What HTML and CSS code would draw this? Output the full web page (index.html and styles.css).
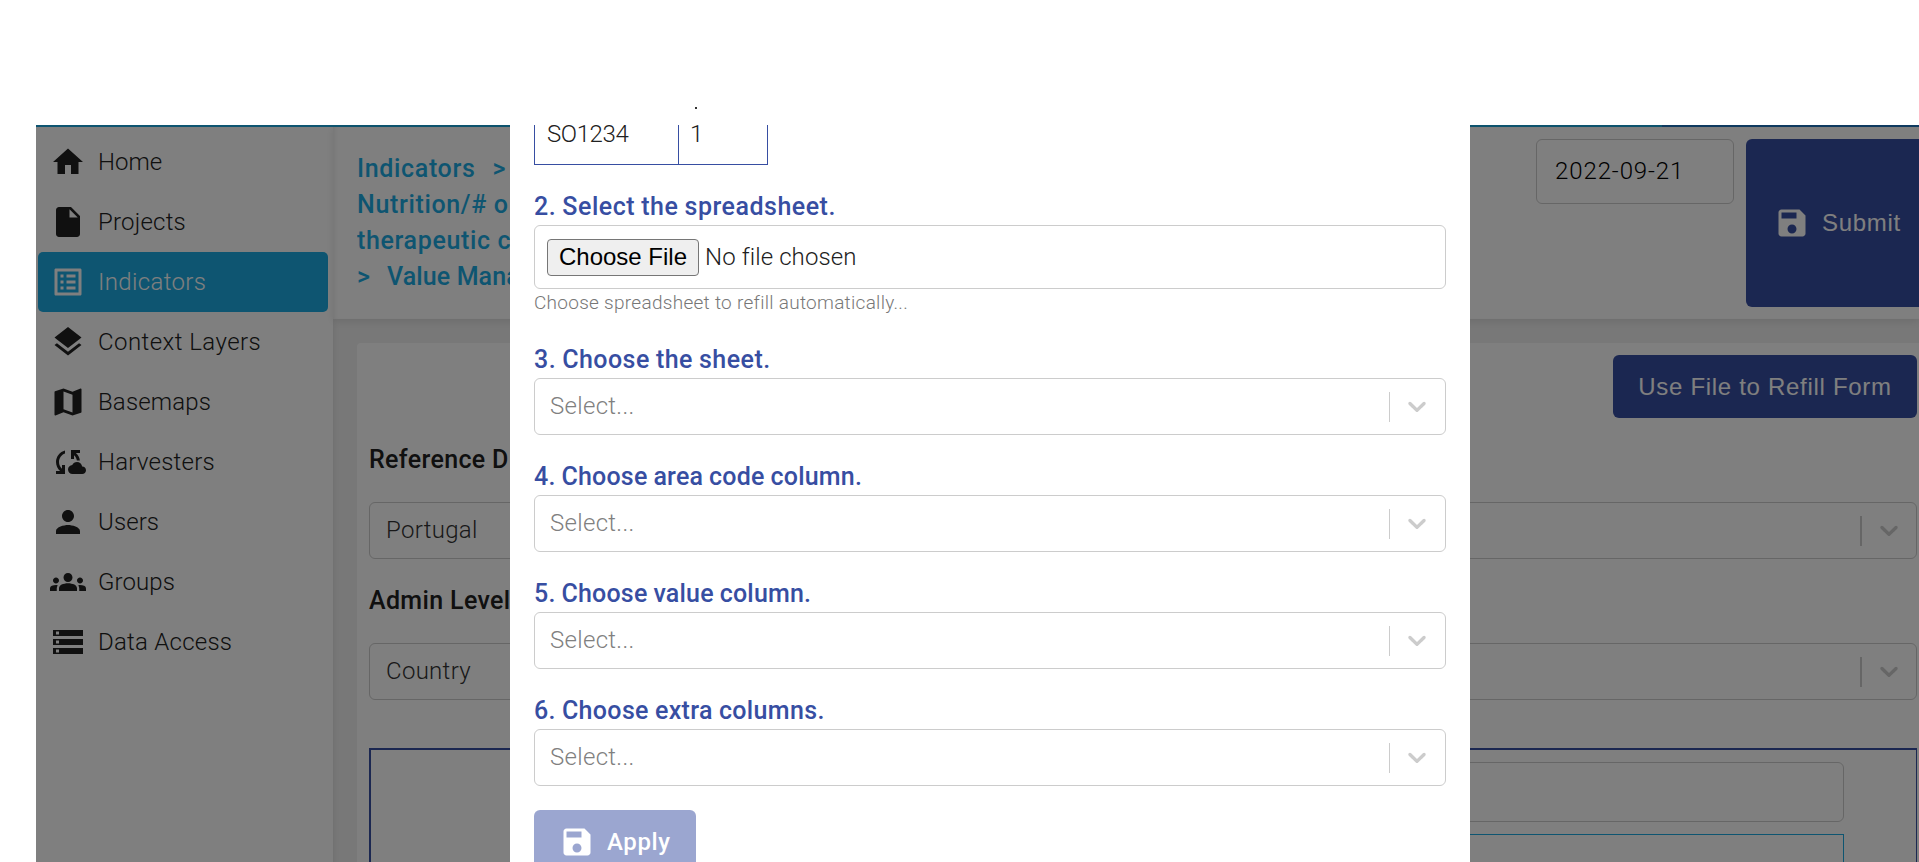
FILE: index.html
```html
<!DOCTYPE html>
<html lang="en">
<head>
<meta charset="utf-8">
<title>Value Manager</title>
<link rel="stylesheet" href="styles.css">
</head>
<body>
<svg class="defs" width="0" height="0">
  <symbol id="save" viewBox="0 0 24 24"><path d="M17 3H5c-1.11 0-2 .9-2 2v14c0 1.1.89 2 2 2h14c1.1 0 2-.9 2-2V7l-4-4zm-5 16c-1.66 0-3-1.34-3-3s1.34-3 3-3 3 1.34 3 3-1.34 3-3 3zm3-10H5V5h10v4z"/></symbol>
  <symbol id="chev" viewBox="0 0 20 20"><path d="M4.516 7.548c0.436-0.446 1.043-0.481 1.576 0l3.908 3.747 3.908-3.747c0.533-0.481 1.141-0.446 1.574 0 0.436 0.445 0.408 1.197 0 1.615-0.406 0.418-4.695 4.502-4.695 4.502-0.217 0.223-0.502 0.335-0.787 0.335s-0.57-0.112-0.789-0.335c0 0-4.287-4.084-4.695-4.502s-0.436-1.17 0-1.615z"/></symbol>
</svg>
<div class="app">
  <div class="topline"><div class="topline-end"></div></div>
  <div class="body">
    <nav class="side">
      <a class="item"><svg viewBox="0 0 24 24"><path d="M10 20v-6h4v6h5v-8h3L12 3 2 12h3v8z"/></svg><span class="n1">Home</span></a>
      <a class="item"><svg viewBox="0 0 24 24"><path d="M6 2c-1.1 0-1.99.9-1.99 2L4 20c0 1.1.89 2 1.99 2H18c1.1 0 2-.9 2-2V8l-6-6H6zm7 7V3.500L18.500 9H13z"/></svg><span class="n2">Projects</span></a>
      <a class="item active"><svg viewBox="0 0 24 24"><path d="M19 5v14H5V5h14m1.100-2H3.900c-.5 0-.9.4-.9.9v16.200c0 .4.4.9.9.9h16.200c.4 0 .9-.5.9-.9V3.900c0-.5-.5-.9-.9-.9zM11 7h6v2h-6V7zm0 4h6v2h-6v-2zm0 4h6v2h-6zM7 7h2v2H7zm0 4h2v2H7zm0 4h2v2H7z"/></svg><span class="n3">Indicators</span></a>
      <a class="item"><svg viewBox="0 0 24 24"><path d="M11.990 18.540l-7.370-5.730L3 14.070l9 7 9-7-1.630-1.270-7.380 5.740zM12 16l7.360-5.730L21 9l-9-7-9 7 1.630 1.270L12 16z"/></svg><span class="n4">Context Layers</span></a>
      <a class="item"><svg viewBox="0 0 24 24"><path d="M20.500 3l-.16.03L15 5.100 9 3 3.360 4.900c-.21.07-.36.25-.36.48V20.500c0 .28.22.5.5.5l.16-.03L9 18.900l6 2.100 5.640-1.900c.21-.07.36-.25.36-.48V3.500c0-.28-.22-.5-.5-.5zM15 19l-6-2.110V5l6 2.110V19z"/></svg><span class="n5">Basemaps</span></a>
      <a class="item"><svg viewBox="0 0 24 24"><path d="M21.500 14.980c-.02 0-.03 0-.05.01C21.200 13.300 19.760 12 18 12c-1.400 0-2.600.83-3.160 2.020C13.260 14.100 12 15.400 12 17c0 1.660 1.340 3 3 3l6.500-.02c1.380 0 2.500-1.120 2.500-2.500s-1.120-2.500-2.500-2.500zM10 4.260v2.090C7.670 7.180 6 9.390 6 12c0 1.770.78 3.340 2 4.440V14h2v6H4v-2h2.730C5.060 16.540 4 14.400 4 12c0-3.730 2.550-6.850 6-7.740zM20 6h-2.730c1.430 1.260 2.410 3.010 2.660 5h-2.020c-.23-1.360-.93-2.550-1.910-3.440V10h-2V4h6v2z"/></svg><span class="n6">Harvesters</span></a>
      <a class="item"><svg viewBox="0 0 24 24"><path d="M12 12c2.210 0 4-1.790 4-4s-1.790-4-4-4-4 1.790-4 4 1.790 4 4 4zm0 2c-2.670 0-8 1.340-8 4v2h16v-2c0-2.660-5.330-4-8-4z"/></svg><span class="n7">Users</span></a>
      <a class="item"><svg viewBox="0 0 24 24"><path d="M12 12.750c1.630 0 3.070.39 4.240.9 1.080.48 1.760 1.560 1.760 2.730V18H6v-1.610c0-1.180.68-2.260 1.760-2.730 1.170-.52 2.610-.91 4.240-.91zM4 13c1.100 0 2-.9 2-2s-.9-2-2-2-2 .9-2 2 .9 2 2 2zm1.130 1.100c-.37-.06-.74-.1-1.130-.1-.99 0-1.930.21-2.780.58C.48 14.900 0 15.620 0 16.430V18h4.500v-1.610c0-.83.23-1.610.63-2.290zM20 13c1.100 0 2-.9 2-2s-.9-2-2-2-2 .9-2 2 .9 2 2 2zm4 3.430c0-.81-.48-1.530-1.220-1.850-.85-.37-1.790-.58-2.780-.58-.39 0-.76.04-1.130.1.4.68.63 1.460.63 2.290V18H24v-1.570zM12 6c1.660 0 3 1.340 3 3s-1.340 3-3 3-3-1.340-3-3 1.340-3 3-3z"/></svg><span class="n8">Groups</span></a>
      <a class="item"><svg viewBox="0 0 24 24"><path d="M2 20h20v-4H2v4zm2-3h2v2H4v-2zM2 4v4h20V4H2zm4 3H4V5h2v2zm-4 7h20v-4H2v4zm2-3h2v2H4v-2z"/></svg><span class="n9">Data Access</span></a>
    </nav>
    <main class="main">
      <header class="head">
        <div class="crumbs">
          <div><span>Indicators</span><span class="gt">&gt;</span></div>
          <div>Nutrition/# o</div>
          <div>therapeutic c</div>
          <div class="last"><span class="gt0">&gt;</span><span>Value Mana</span></div>
        </div>
        <div class="date"><span>2022-09-21</span></div>
        <div class="submit"><svg><use href="#save"/></svg><span>Submit</span></div>
      </header>
      <section class="panel">
        <div class="refill"><span>Use File to Refill Form</span></div>
        <div class="flabel">Reference D</div>
        <div class="sel wide"><span class="val">Portugal</span><i></i><svg><use href="#chev"/></svg></div>
        <div class="flabel second">Admin Level</div>
        <div class="sel wide"><span class="val">Country</span><i></i><svg><use href="#chev"/></svg></div>
        <div class="grid">
          <div class="input"></div>
          <div class="subgrid"></div>
        </div>
      </section>
    </main>
  </div>
  <div class="overlay">
    <div class="modal">
      <div class="tbl"><div class="c1"><span>SO1234</span></div><div class="c2"><span>1</span></div></div>
      <div class="group">
        <div class="label l2">2. Select the spreadsheet.</div>
        <div class="file"><span class="btn">Choose File</span><span class="none">No file chosen</span></div>
        <div class="hint">Choose spreadsheet to refill automatically...</div>
      </div>
      <div class="group">
        <div class="label l3">3. Choose the sheet.</div>
        <div class="sel"><span class="ph">Select...</span><i></i><svg><use href="#chev"/></svg></div>
      </div>
      <div class="group">
        <div class="label l4">4. Choose area code column.</div>
        <div class="sel"><span class="ph">Select...</span><i></i><svg><use href="#chev"/></svg></div>
      </div>
      <div class="group">
        <div class="label l5">5. Choose value column.</div>
        <div class="sel"><span class="ph">Select...</span><i></i><svg><use href="#chev"/></svg></div>
      </div>
      <div class="group">
        <div class="label l6">6. Choose extra columns.</div>
        <div class="sel"><span class="ph">Select...</span><i></i><svg><use href="#chev"/></svg></div>
      </div>
      <div class="apply"><svg><use href="#save"/></svg><span>Apply</span></div>
    </div>
  </div>
</div>
<div class="speck"></div>
</body>
</html>
```

FILE: styles.css
```css
* { box-sizing: border-box; }
html, body { margin: 0; height: 862px; overflow: hidden; background: #fff; }
body {
  padding: 125px 0 0 36px;
  font: 300 24px/36px Roboto, "Open Sans", sans-serif;
  color: #212121;
}
span, .label, .crumbs div, .flabel, .hint { white-space: nowrap; }
svg { display: block; fill: currentColor; flex: none; }
.defs { position: absolute; }
.app { position: relative; width: 1883px; height: 737px; overflow: hidden; display: flex; flex-direction: column; }
.topline { height: 2px; background: #1cabe2; display: flex; justify-content: flex-end; flex: none; }
.topline-end { width: 257px; background: #1f78c4; }
.body { display: flex; flex: 1; }
.side { width: 297px; padding: 5px 5px 0 2px; flex: none; background: #fff; }
.item { display: flex; align-items: center; height: 60px; padding-left: 12px; border-radius: 5px; }
.item svg { width: 36px; height: 36px; margin-right: 12px; }
.item.active { background: #1cabe2; color: #fff; }
.n2 { letter-spacing: .22px; }
.n3 { letter-spacing: .35px; }
.n4 { letter-spacing: .45px; }
.n5 { letter-spacing: .15px; }
.n6, .n9 { letter-spacing: .25px; }
.n7, .n8 { letter-spacing: .1px; }
.main { flex: 1; min-width: 0; background: #f0f0f0; box-shadow: inset 4px 0 6px -3px rgba(0,0,0,.08); }
.head { height: 192px; background: #fff; padding: 12px 0 12px 24px; display: flex; box-shadow: inset 4px 0 6px -4px rgba(0,0,0,.12), 0 2px 8px rgba(0,0,0,.1); }
.crumbs { width: 1179px; padding-top: 12px; color: #1cabe2; font-size: 25px; font-weight: 500; letter-spacing: .65px; overflow: hidden; flex: none; }
.crumbs .last { letter-spacing: .1px; }
.gt { margin-left: 17px; }
.gt0 { margin-right: 17px; }
.date { width: 198px; height: 65px; border: 1px solid #ccc; border-radius: 6px; padding: 13px 18px; color: #000; letter-spacing: .9px; flex: none; }
.submit, .refill { background: #374ea2; color: #fff; border-radius: 6px; font-family: "Liberation Sans", Arial, sans-serif; font-weight: 400; letter-spacing: .7px; display: flex; align-items: center; }
.submit { width: 190px; margin-left: 12px; padding-left: 28px; height: 168px; flex: none; }
.submit svg, .apply svg { width: 36px; height: 36px; margin-right: 12px; }
.panel { margin: 24px 0 0 24px; padding: 12px 2px 0 12px; background: #fff; height: 560px; border-radius: 4px 0 0 0; }
.refill { width: 304px; height: 63px; margin-left: auto; justify-content: center; }
.flabel { font-size: 25px; font-weight: 500; letter-spacing: .35px; margin: 24px 0 24px; }
.sel { height: 57px; border: 1px solid #ccc; border-radius: 6px; display: flex; align-items: center; padding: 0 13px 0 15px; color: #ccc; background: #fff; }
.sel span { letter-spacing: .3px; padding-bottom: 1px; }
.sel .val { color: #333; padding-left: 1px; }
.sel .ph { color: #808080; }
.sel i { width: 1px; height: 30px; background: currentColor; margin: 0 12px 0 auto; }
.sel.wide { padding-right: 12px; }
.sel.wide i { width: 2px; }
.sel svg { width: 30px; height: 30px; margin-bottom: 1px; }
.grid { margin-top: 48px; height: 200px; border: 2px solid #374ea2; border-right-width: 1px; padding: 12px 72px 0 200px; }
.input { height: 60px; border: 1px solid #ccc; border-radius: 6px; }
.subgrid { margin-top: 12px; height: 100px; border: 1px solid #1cabe2; }
.overlay { position: absolute; inset: 0; background: rgba(0,0,0,.5); }
.modal { width: 960px; height: 737px; margin-left: 474px; padding: 0 24px; background: #fff; overflow: hidden; }
.tbl { display: flex; width: 234px; height: 40px; border: 1px solid #374ea2; border-top: 0; margin-bottom: 24px; overflow: hidden; }
.tbl span { display: block; margin-top: -9px; }
.c1 { width: 144px; border-right: 1px solid #374ea2; padding-left: 12px; letter-spacing: -.4px; }
.c2 { padding-left: 11px; }
.group { margin-bottom: 24px; }
.label { height: 36px; font-size: 25px; font-weight: 500; color: #374ea2; letter-spacing: .2px; word-spacing: -.5px; }
.l2 { letter-spacing: .5px; }
.l3 { letter-spacing: .45px; }
.l6 { letter-spacing: .35px; }
.file { height: 64px; border: 1px solid #ccc; border-radius: 6px; display: flex; align-items: center; padding-left: 12px; }
.btn { width: 152px; height: 37px; border: 1px solid #767676; border-radius: 4px; background: #efefef; color: #000; font: 400 24px/34px "Liberation Sans", Arial, sans-serif; text-align: center; }
.none { margin-left: 6px; letter-spacing: .1px; }
.hint { height: 29px; line-height: 27px; font-size: 19px; color: #777; letter-spacing: .28px; }
.apply { width: 162px; height: 63px; background: #9ba6d0; color: #fff; border-radius: 6px; display: flex; align-items: center; padding-left: 25px; font-weight: 500; letter-spacing: .6px; }
.speck { position: absolute; left: 695px; top: 107px; width: 2px; height: 2px; background: #333; }
```
